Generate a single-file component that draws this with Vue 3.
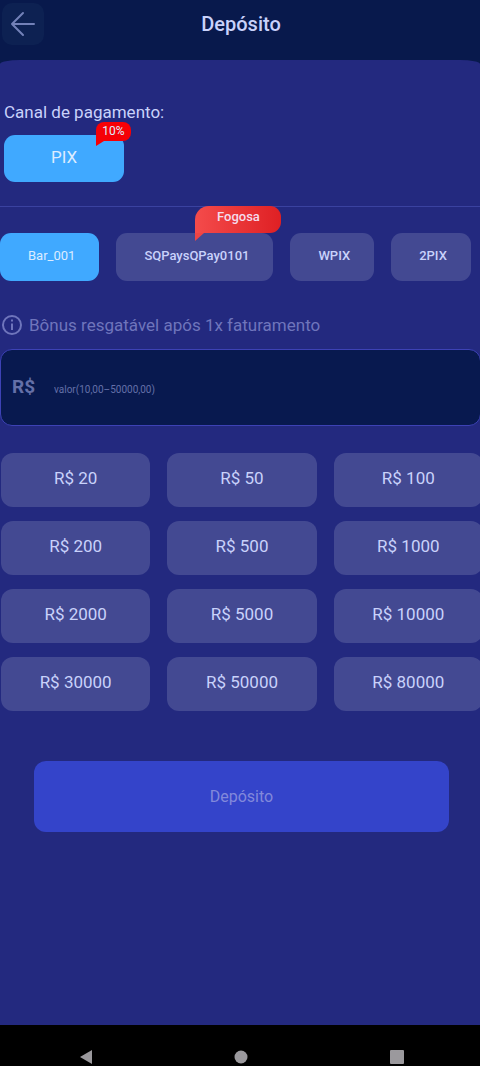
<script setup>
import { ref } from 'vue'

const channels = [
  { name: 'Bar_001' },
  { name: 'SQPaysQPay0101', tag: 'Fogosa' },
  { name: 'WPIX' },
  { name: '2PIX' },
]
const amounts = [20, 50, 100, 200, 500, 1000, 2000, 5000, 10000, 30000, 50000, 80000]
const selected = ref('Bar_001')
const amount = ref('')
</script>

<template>
  <div class="page">
    <header class="header">
      <button class="back" type="button" aria-label="Voltar">
        <svg width="26" height="26" viewBox="0 0 26 26" fill="none" stroke="currentColor" stroke-width="2" stroke-linecap="round" stroke-linejoin="round">
          <path d="M13 2 2 13l11 11M2 13h22" />
        </svg>
      </button>
      <h1 class="title">Depósito</h1>
    </header>

    <main class="panel">
      <section class="payment">
        <h2 class="label">Canal de pagamento:</h2>
        <button class="method" type="button">
          PIX
          <span class="bonus">
            10%
            <svg class="bonus-tail" width="8" height="5" viewBox="0 0 8 5"><path d="M0 0h8L0 5z" fill="#f60006" /></svg>
          </span>
        </button>
      </section>

      <div class="channels">
        <button
          v-for="c in channels"
          :key="c.name"
          type="button"
          class="channel"
          :class="{ active: selected === c.name }"
          @click="selected = c.name"
        >
          {{ c.name }}
          <span v-if="c.tag" class="tag">
            {{ c.tag }}
            <svg class="tag-tail" width="9" height="8" viewBox="0 0 9 8"><path d="M0 0h9L0 8z" fill="#ef4444" /></svg>
          </span>
        </button>
      </div>

      <p class="note">
        <svg width="22" height="22" viewBox="0 0 22 22" fill="none" stroke="currentColor" stroke-width="2">
          <circle cx="11" cy="11" r="9" />
          <path d="M11 9.500v6.500M11 5.500v2" />
        </svg>
        Bônus resgatável após 1x faturamento
      </p>

      <div class="field">
        <label class="currency" for="amount">R$</label>
        <input id="amount" v-model="amount" class="amount" type="text" inputmode="decimal" placeholder="valor(10,00–50000,00)" />
      </div>

      <div class="amounts">
        <button v-for="a in amounts" :key="a" type="button" class="preset" @click="amount = String(a)">R$ {{ a }}</button>
      </div>

      <button class="submit" type="button">Depósito</button>
    </main>

    <nav class="system" aria-label="Navegação do sistema">
      <button type="button" aria-label="Voltar">
        <svg width="14" height="16" viewBox="0 0 14 16"><path d="M13 1v14L1 8z" fill="currentColor" /></svg>
      </button>
      <button type="button" aria-label="Início">
        <svg width="14" height="14" viewBox="0 0 14 14"><circle cx="7" cy="7" r="6.500" fill="currentColor" /></svg>
      </button>
      <button type="button" aria-label="Recentes">
        <svg width="14" height="14" viewBox="0 0 14 14"><rect width="14" height="14" rx="1" fill="currentColor" /></svg>
      </button>
    </nav>
  </div>
</template>

<style>
body {
  margin: 0;
  background: #08194c;
}
</style>

<style scoped>
.page {
  display: flex;
  flex-direction: column;
  min-height: 100vh;
  overflow: hidden;
  background: #08194c;
  color: #c9d2fb;
  font-family: Roboto, "Liberation Sans", sans-serif;
}
button {
  margin: 0;
  padding: 0;
  border: 0;
  color: inherit;
  font: inherit;
  cursor: pointer;
}
svg {
  display: block;
}
.header {
  display: grid;
  grid-template-columns: 42px 1fr 42px;
  align-items: center;
  height: 48px;
  padding: 0 0 12px 2px;
}
.back {
  display: grid;
  place-items: center;
  height: 42px;
  border-radius: 10px;
  background: #0d2152;
  color: #7381b8;
}
.title {
  margin: 0;
  font-size: 20px;
  font-weight: 500;
  line-height: 24px;
  text-align: center;
}
.panel {
  flex: 1;
  display: flex;
  flex-direction: column;
  border-radius: 20px 20px 0 0 / 4px 4px 0 0;
  background: #23297f;
}
.payment {
  padding: 40px 4px 24px;
  border-bottom: 1px solid #3a42a0;
}
.label {
  margin: 0 0 11px;
  font-size: 17px;
  font-weight: 400;
  line-height: 24px;
}
.method {
  position: relative;
  display: block;
  width: 120px;
  height: 47px;
  padding-bottom: 3px;
  border-radius: 11px;
  background: #40a9ff;
  color: #dcecff;
  font-size: 17px;
}
.bonus {
  position: absolute;
  top: -13px;
  right: -7px;
  width: 35px;
  height: 19px;
  border-radius: 8px 8px 8px 0;
  background: #f60006;
  font-size: 12px;
  line-height: 18px;
  text-align: center;
}
.bonus-tail {
  position: absolute;
  top: 100%;
  left: 0;
}
.channels {
  display: flex;
  gap: 17px;
  margin-top: 26px;
}
.channel {
  position: relative;
  height: 48px;
  padding: 0 24px 3px 28px;
  border-radius: 11px;
  background: #434992;
  font-size: 13px;
  font-weight: 500;
  white-space: nowrap;
}
.channel.active {
  background: #40a9ff;
  color: #dcecff;
  font-weight: 400;
}
.tag {
  position: absolute;
  top: -27px;
  right: -8px;
  width: 86px;
  height: 27px;
  border-radius: 14px 11px 11px 0;
  background: linear-gradient(90deg, #f44b4b, #df2024);
  color: #f5dcec;
  line-height: 22px;
  text-align: center;
}
.tag-tail {
  position: absolute;
  top: 100%;
  left: 0;
}
.note {
  display: flex;
  align-items: center;
  gap: 6px;
  margin: 32px 0 12px;
  padding-left: 1px;
  color: #6f75bc;
  font-size: 17px;
  line-height: 24px;
}
.field {
  display: flex;
  align-items: center;
  height: 75px;
  margin: 0 -1px 0 0;
  border: 1px solid #3d42b5;
  border-radius: 12px;
  background: #08194f;
}
.currency {
  width: 42px;
  padding: 0 0 3px 11px;
  color: #6470a8;
  font-size: 19px;
  font-weight: 700;
}
.amount {
  flex: 1;
  min-width: 0;
  height: 40px;
  margin: 4px 0 0;
  padding: 0;
  border: 0;
  outline: 0;
  background: transparent;
  color: #c9d2fb;
  font: 10px Roboto, "Liberation Sans", sans-serif;
}
.amount::placeholder {
  color: #6470a8;
  opacity: 1;
}
.amounts {
  display: grid;
  grid-template-columns: repeat(3, 1fr);
  gap: 14px 17px;
  margin: 27px -3px 0 1px;
}
.preset {
  height: 54px;
  padding-bottom: 4px;
  border-radius: 12px;
  background: #434992;
  font-size: 17px;
}
.submit {
  height: 71px;
  margin: 50px 31px 24px 34px;
  border-radius: 12px;
  background: #3444ca;
  color: #8289db;
  font-size: 16px;
}
.system {
  display: grid;
  grid-template-columns: repeat(3, 1fr);
  height: 41px;
  padding: 0 5px 0 8px;
  background: #000;
}
.system button {
  display: grid;
  place-items: center;
  padding-top: 22px;
  background: none;
  color: #9b999d;
}
</style>
